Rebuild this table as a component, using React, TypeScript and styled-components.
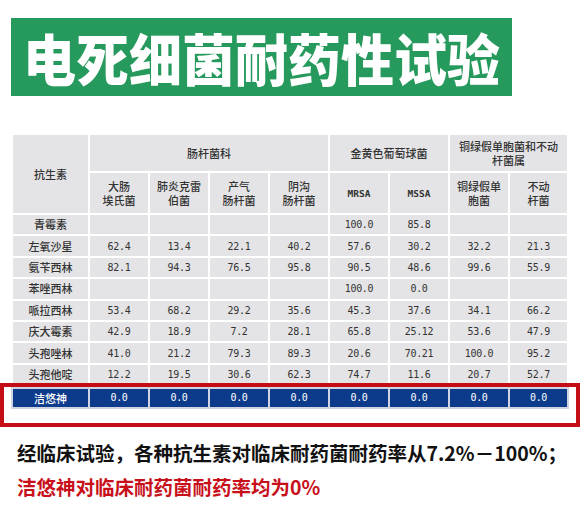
import React from "react";
import styled, { createGlobalStyle } from "styled-components";

interface DataRow {
  name: string;
  values: string[];
}

interface SubHead {
  lines: string[];
  mono?: boolean;
}

const rows: DataRow[] = [
  { name: "青霉素", values: ["", "", "", "", "100.0", "85.8", "", ""] },
  { name: "左氧沙星", values: ["62.4", "13.4", "22.1", "40.2", "57.6", "30.2", "32.2", "21.3"] },
  { name: "氨苄西林", values: ["82.1", "94.3", "76.5", "95.8", "90.5", "48.6", "99.6", "55.9"] },
  { name: "苯唑西林", values: ["", "", "", "", "100.0", "0.0", "", ""] },
  { name: "哌拉西林", values: ["53.4", "68.2", "29.2", "35.6", "45.3", "37.6", "34.1", "66.2"] },
  { name: "庆大霉素", values: ["42.9", "18.9", "7.2", "28.1", "65.8", "25.12", "53.6", "47.9"] },
  { name: "头孢唑林", values: ["41.0", "21.2", "79.3", "89.3", "20.6", "70.21", "100.0", "95.2"] },
  { name: "头孢他啶", values: ["12.2", "19.5", "30.6", "62.3", "74.7", "11.6", "20.7", "52.7"] },
];

const subHeads: SubHead[] = [
  { lines: ["大肠", "埃氏菌"] },
  { lines: ["肺炎克雷", "伯菌"] },
  { lines: ["产气", "肠杆菌"] },
  { lines: ["阴沟", "肠杆菌"] },
  { lines: ["MRSA"], mono: true },
  { lines: ["MSSA"], mono: true },
  { lines: ["铜绿假单", "胞菌"] },
  { lines: ["不动", "杆菌"] },
];

// cell widths, the 2px border-spacing comes on top
const colWidths = [75, 58, 58, 58, 58, 58, 58, 58, 57];

const Cols: React.FC = () => (
  <colgroup>
    {colWidths.map((w, i) => (
      <col key={`col-${i}`} style={{ width: w }} />
    ))}
  </colgroup>
);

const App: React.FC = () => {
  return (
    <Page>
      <GlobalStyle />
      <Banner>
        <BannerText>电死细菌耐药性试验</BannerText>
      </Banner>

      <Table>
        <Cols />
        <thead>
          <tr>
            <HeadCell rowSpan={2}>抗生素</HeadCell>
            <HeadCell colSpan={4} $height={36}>肠杆菌科</HeadCell>
            <HeadCell colSpan={2}>金黄色葡萄球菌</HeadCell>
            <HeadCell colSpan={2}>
              <Line>铜绿假单胞菌和不动</Line>
              <Line>杆菌属</Line>
            </HeadCell>
          </tr>
          <tr>
            {subHeads.map((h, i) => (
              <HeadCell key={`sub-${i}`} $height={40}>
                {h.mono ? (
                  <Mono>{h.lines[0]}</Mono>
                ) : (
                  h.lines.map((line, j) => <Line key={`l-${j}`}>{line}</Line>)
                )}
              </HeadCell>
            ))}
          </tr>
        </thead>
        <tbody>
          {rows.map((row) => (
            <tr key={row.name}>
              <NameCell>{row.name}</NameCell>
              {row.values.map((v, i) => (
                <ValueCell key={`${row.name}-${i}`}>{v}</ValueCell>
              ))}
            </tr>
          ))}
        </tbody>
      </Table>

      <Highlight>
        <BlueTable>
          <Cols />
          <tbody>
            <tr>
              <BlueName>洁悠神</BlueName>
              {Array.from({ length: 8 }).map((_, i) => (
                <BlueCell key={`blue-${i}`}>0.0</BlueCell>
              ))}
            </tr>
          </tbody>
        </BlueTable>
      </Highlight>

      <Notes>
        <Note>经临床试验，各种抗生素对临床耐药菌耐药率从7.2%－100%；</Note>
        <Note $red>洁悠神对临床耐药菌耐药率均为0%</Note>
      </Notes>
    </Page>
  );
};

const GlobalStyle = createGlobalStyle`
  body {
    margin: 0;
    background: #ffffff;
    font-family: "Noto Sans CJK SC", "Noto Sans", sans-serif;
  }
`;

const Page = styled.div`
  width: 580px;
  height: 508px;
  overflow: hidden;
  padding-top: 18px;
  box-sizing: border-box;
`;

const Banner = styled.div`
  margin-left: 11px;
  width: 501px;
  height: 78px;
  background: #26995d;
  display: flex;
  align-items: center;
  justify-content: center;
`;

const BannerText = styled.div`
  color: #ffffff;
  font-family: "Noto Sans CJK SC", sans-serif;
  font-weight: 900;
  font-size: 53px;
  line-height: 1;
  transform: scaleY(1.06);
`;

const Table = styled.table`
  margin: 37px 0 0 11px;
  width: 558px;
  table-layout: fixed;
  border-collapse: separate;
  border-spacing: 2px;
  background: #ffffff;
`;

const HeadCell = styled.th<{ $height?: number }>`
  box-sizing: border-box;
  height: ${(p) => (p.$height ? `${p.$height}px` : "auto")};
  padding: 0;
  background: #e4e4e6;
  color: #333333;
  font-size: 11px;
  font-weight: 500;
  line-height: 14px;
  text-align: center;
  vertical-align: middle;
`;

const Line = styled.div`
  display: block;
`;

const Mono = styled.span`
  font-family: "DejaVu Sans Mono", monospace;
  font-size: 9.5px;
  font-weight: 700;
`;

const NameCell = styled.td`
  box-sizing: border-box;
  height: 19.4px;
  padding: 0;
  background: #e4e4e6;
  color: #333333;
  font-size: 11px;
  font-weight: 500;
  text-align: center;
  line-height: 15px;
  overflow: hidden;
`;

const ValueCell = styled(NameCell)`
  font-family: "DejaVu Sans Mono", monospace;
  font-size: 10px;
  font-weight: 400;
  letter-spacing: -0.3px;
`;

const Highlight = styled.div`
  margin-top: -3px;
  width: 580px;
  height: 44px;
  box-sizing: border-box;
  border: 4px solid #c40d14;
  padding: 0 0 0 7px;
  background: #ffffff;
  position: relative;
`;

const BlueTable = styled.table`
  width: 558px;
  table-layout: fixed;
  border-collapse: separate;
  border-spacing: 2px;
  background: #cfd4e2;
`;

const BlueName = styled.td`
  box-sizing: border-box;
  height: 18px;
  padding: 0;
  background: #0d3b8c;
  color: #ffffff;
  font-size: 11px;
  font-weight: 500;
  text-align: center;
  line-height: 16px;
`;

const BlueCell = styled(BlueName)`
  font-family: "DejaVu Sans Mono", monospace;
  font-size: 10px;
  font-weight: 400;
  letter-spacing: -0.3px;
`;

const Notes = styled.div`
  margin-top: 14px;
  padding-left: 17px;
  display: flex;
  flex-direction: column;
  gap: 10px;
`;

const Note = styled.div<{ $red?: boolean }>`
  color: ${(p) => (p.$red ? "#c8101b" : "#111111")};
  font-size: 19.5px;
  font-weight: 700;
  line-height: 24px;
  white-space: nowrap;
`;

export default App;
